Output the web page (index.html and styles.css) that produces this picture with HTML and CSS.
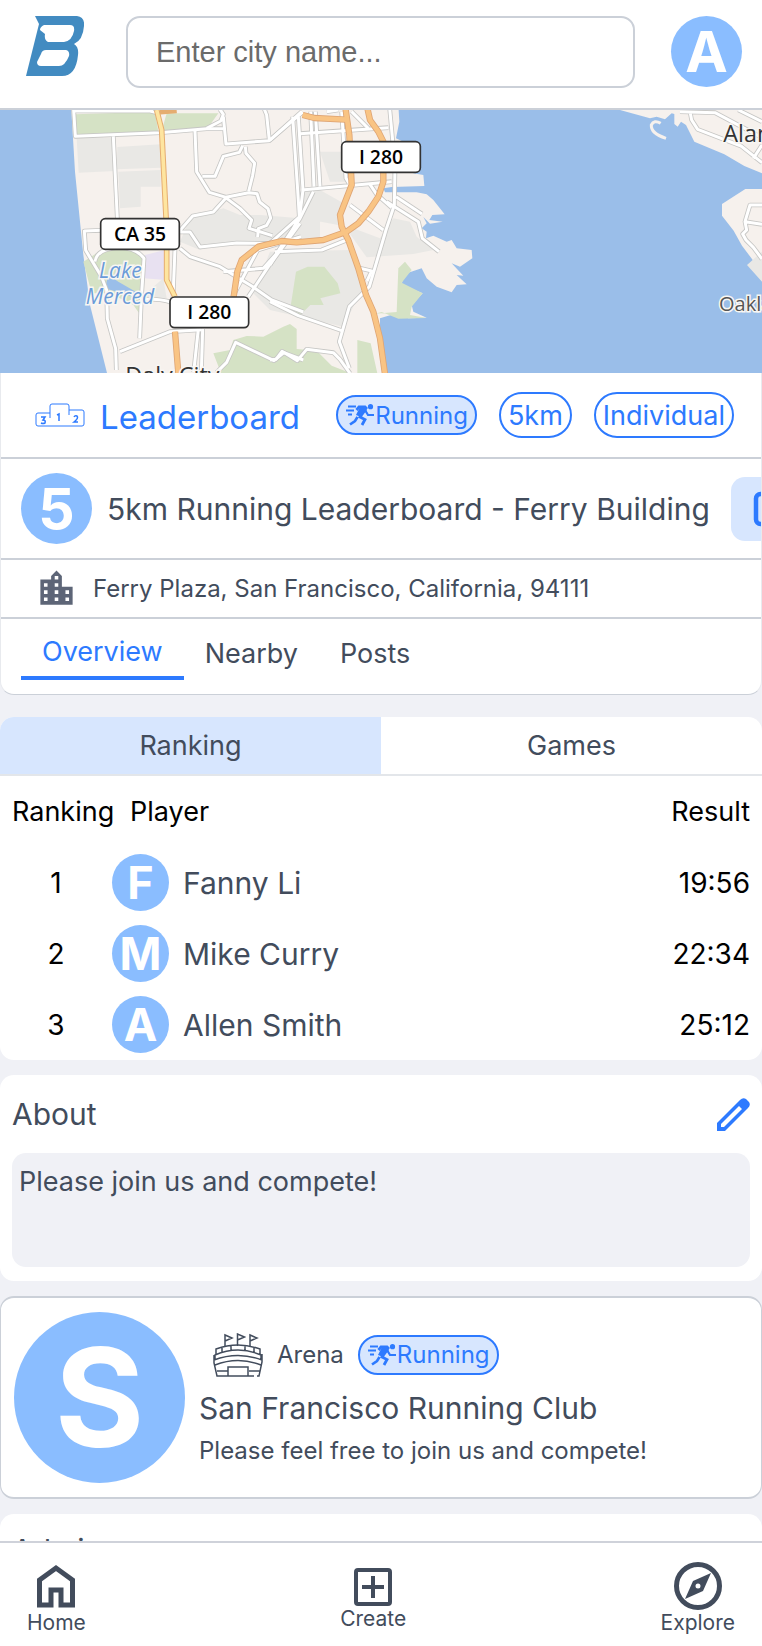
FILE: index.html
```html
<!DOCTYPE html>
<html lang="en">
<head>
    <meta charset="UTF-8">
    <meta name="viewport" content="width=device-width, initial-scale=1">
    <title>Leaderboard</title>
    <link rel="stylesheet" href="styles.css">
</head>
<body>
    <!-- shared icons -->
    <svg class="icon-defs" aria-hidden="true">
        <symbol id="icon-run" viewBox="0 0 30 22">
            <g fill="none" stroke="currentColor" stroke-width="2">
                <path d="M3 2.500h8M1 6.500h8M3 10.500h4"/>
                <path d="M11.500 6l2.500-3h6l2 2M21 5l-6 8 5 2.500-3 5.500" stroke-width="2.800"/>
                <path d="M20 6l3 5h6" stroke-width="2.200"/>
                <path d="M12.500 13l-2.500 4-5 3.500" stroke-width="2.600"/>
            </g>
            <path d="M15 3h6l-5 10-5-2z" fill="currentColor"/>
            <circle cx="25.500" cy="2.700" r="2.600" fill="currentColor"/>
        </symbol>
    </svg>

    <div class="app">
        <header class="topbar">
            <a href="#" class="logo" aria-label="Home page">
                <svg viewBox="0 0 58 60" width="58" height="60">
                    <path fill="#428bc1" fill-rule="evenodd" d="M9 0H51Q59 1 58 10Q57 24 48 28Q53 31 52 39Q50 60 36 60H0L13 8ZM18 9Q14 11 14 14L19 18Q18 24 22 26H38Q46 25 48 15Q49 9 44 9ZM20 34Q16 34 15 38L11 46Q11 50 15 50H33Q39 50 43 40Q44 35 40 34Z"/>
                </svg>
            </a>
            <input type="text" class="search" placeholder="Enter city name..." aria-label="City name">
            <div class="avatar avatar-md">A</div>
        </header>

        <main class="content">
            <svg class="map" viewBox="0 15 2286 789" preserveAspectRatio="xMidYMid slice" role="img" aria-label="Map of San Francisco">
                <defs>
                    <g id="roads">
                        <!-- west side -->
                        <g transform="translate(180 0)">
                            <path d="M40 0l6 94L300 83l140-12h50"/>
                            <path d="M40 18h240M270 18l20 5"/>
                            <path d="M160 94l12 246M405 78l5 122 38 62 50 15 68-14 25 3 8 25 25 20 8 28-12 22-25 10-2 25"/>
                            <path d="M440 70l42-22 8-20-10-15M490 35l8 82 130-10 100-86M612 10l8 20 8 75"/>
                            <path d="M548 122l-10 20-48 12-25 60h-38"/>
                            <path d="M556 125l2 20 26 30-6 36-12 48"/>
                            <path d="M500 277l-40 44-62 12-42 48M356 381h34l30 45 110-12 115 2M500 280l40 30 35 35-8 25 70 22"/>
                            <path d="M125 376l-52 2 4 58 48 80 15 40 2 85 25 90 2 64M180 740l150-60 95-6M345 430l-6 150"/>
                            <path d="M360 430l30 25 90 30 95 58 60 42 95 36M105 470q5-40 75-42 48 0 72 32l-8 120-5 120M245 582q70 0 85 10"/>
                            <path d="M415 672l-14 130M428 672l-4 130M470 802l30-30 27-60 115 55 30-24 58 22"/>
                            <path d="M518 575l75-140 130-40M565 575l60-90 95-130M490 500l120-10 45-50"/>
                        </g>
                        <!-- east side -->
                        <g transform="translate(810 0)">
                            <path d="M0 105L95 20M68 35l15 220 5 80-25 50-63 90M85 35l14 220-10 80-89 80M122 20l10 225M136 20l14 225"/>
                            <path d="M90 86l265-18M95 255l270-25M215 20l13 200 12 20M358 0l17 180-2 120-25 75-50 170-60 60-30 105 30 80"/>
                            <path d="M130 260l-40 80-60 90-30 50M15 440l140-5 75-30M350 290l95 60 12 50 50 40"/>
                            <path d="M378 275l78 52M240 300l100 75M300 238l20 30 45 40M270 490l35 8-14 30"/>
                            <path d="M0 590l85 42 130 45M0 765l18-2 18-24 46 28 28-34 80 10 20 20 30 42M245 20l50 50M170 20l35-5"/>
                        </g>
                        <g transform="translate(1800 0)">
                            <path d="M240 20l105 3 141 75M270 20l5 25 18 28 130 50 63 50M415 15l71 35M460 160l26-40"/>
                            <path d="M486 300h-36l-15 50 5 25-12 12 10 18 22 22 26 35M435 350l51 8"/>
                        </g>
                    </g>
                    <g id="highways">
                        <path d="M701 575L712 500 725 465 775 425 845 408 890 412 970 405 1040 380 1075 355 1105 320 1135 275 1150 230V110L1135 80 1110 45 1100 0"/>
                        <path d="M1035 0L1048 90 1055 240 1020 330 1025 365 1045 405 1075 490 1098 570 1120 620 1140 700 1156 815"/>
                        <path d="M908 30l35 9 95 5M525 680l10 125"/>
                    </g>
                </defs>
                <rect class="map-water" x="0" y="0" width="2286" height="820"/>
                <path class="map-land" d="M213 0L225 200 250 450 270 600 325 820H1161L1140 700V640L1190 625 1225 640 1280 638 1240 620 1235 600 1268 565 1205 540 1212 500 1188 485 1220 505 1265 490 1280 520 1310 545 1355 562 1370 540 1400 538 1370 510 1390 512 1355 475 1380 485 1417 460 1415 435 1370 430 1355 405 1340 410 1300 392 1278 400 1280 380 1265 370 1280 355 1270 336 1290 356 1328 350 1288 345 1297 330 1334 328 1300 285 1280 268 1250 262H1155L1150 250 1175 246 1273 243 1270 210 1240 205 1210 110 1188 100 1198 50 1195 0z"/>
                <path class="map-land" d="M1860 15l90 25 20-5 25 8 20-18 8 2v30l10 8 10-15 15 10 25 50 90 38 60 35 53 22V0zM2286 252h-50l-70 45v35l35 45 25 45 45 60 15 15z"/>
                <path class="map-land-line" d="M1982 55q-20-12-28 5-2 25 44 40"/>

                <path class="map-urban" d="M230 100l116-2v100l-110 5zM352 126l130-8v70l-132 5zM355 200l127-5v50h-60v60l-62 5zM540 410l30-70 100-30 50 20 60 0 120 10 60-20v80l-300 20-60 15zM900 260l60-5 80 45-25 60-110-20zM960 140h80v90h-50zM1060 370l80 30 40-60 50 10 20 45 50 40-60 12-140 10-50-70zM810 440l240-5 40 110-60 120-220-50-50-50zM2286 440l-45 40 45 50zM420 580l70-60 10 60z"/>
                <path class="map-park" d="M225 28l240-8 10 60-245 10zM500 25h155l-30 42-140 10zM250 470l55-35 100 0 35 30-15 110 0 60-25-35-70-35-55 0zM888 500l35-15 50 0 40 50 8 30-60 15 10 20-40 0-30 30-30-20zM640 745l50-10 10-30 40-12 50 2 60-30 20-8 20 15v60l60 5 45 45 50 20 20 20H670zM1072 705l40 10 20 90h-60zM1195 490l20-20 20 25-30 38 63 32-33 40-5 25 50 9-85 2-50-20-20 5 65-5z"/>
                <path class="map-water" d="M325 510l30 20 60 35v15l-100-30z"/>
                <path class="map-mall" d="M435 450l60-15 5 90-70-5z"/>

                <use href="#roads" class="road-edge"/>
                <use href="#roads" class="road-fill"/>
                <path class="yellow-edge" d="M470 15l15 60 15 300 0 150 25 50M480 20l50-4"/>
                <path class="yellow-fill" d="M470 15l15 60 15 300 0 150 25 50"/>
                <use href="#highways" class="highway-edge"/>
                <use href="#highways" class="highway-fill"/>

                <text class="map-lake" x="297" y="520">Lake</text>
                <text class="map-lake" x="257" y="597">Merced</text>
                <text class="map-city" x="376" y="836">Daly City</text>
                <text class="map-city" x="2170" y="110">Alameda</text>
                <text class="map-town" x="2157" y="617">Oakland</text>
                <g class="map-shield">
                    <rect x="302" y="341" width="236" height="92" rx="14"/>
                    <text x="420" y="407">CA 35</text>
                    <rect x="510" y="576" width="236" height="92" rx="14"/>
                    <text x="628" y="642">I 280</text>
                    <rect x="1025" y="110" width="236" height="92" rx="14"/>
                    <text x="1143" y="177">I 280</text>
                </g>
            </svg>

            <section class="card event-card">
                <div class="event-type">
                    <svg class="podium" viewBox="0 0 50 24" width="50" height="24" fill="none" stroke="currentColor" stroke-width="1">
                        <path d="M15 15V3q0-2 2-2h15q2 0 2 2v9M15 10H3q-2 0-2 2v9q0 2 2 2h44q2 0 2-2V9q0-2-2-2H34"/>
                        <path d="M6 14h4l-2 3q3 0 2 3-2 1-4 0M22 12l2-1v7M39 14q1-2 3-1 2 2-3 6h4" stroke-width="1.500"/>
                    </svg>
                    <h1>Leaderboard</h1>
                    <div class="tags">
                        <span class="tag tag-sport"><svg width="30" height="22"><use href="#icon-run"/></svg>Running</span>
                        <span class="tag">5km</span>
                        <span class="tag">Individual</span>
                    </div>
                </div>
                <div class="event-title">
                    <div class="avatar avatar-md">5</div>
                    <h2>5km Running Leaderboard - Ferry Building</h2>
                    <button class="btn-message" aria-label="Message">
                        <svg width="36" height="36" viewBox="0 0 24 24" fill="none" stroke="currentColor" stroke-width="3"><rect x="2" y="2" width="20" height="20" rx="3"/></svg>
                    </button>
                </div>
                <div class="event-address">
                    <svg width="43" height="43" viewBox="0 0 24 24"><path fill="#5d6577" d="M15 11V5l-3-3-3 3v2H3v14h18V11h-6zm-8 8H5v-2h2v2zm0-4H5v-2h2v2zm0-4H5V9h2v2zm6 8h-2v-2h2v2zm0-4h-2v-2h2v2zm0-4h-2V9h2v2zm0-4h-2V5h2v2zm6 12h-2v-2h2v2zm0-4h-2v-2h2v2z"/></svg>
                    <span>Ferry Plaza, San Francisco, California, 94111</span>
                </div>
                <nav class="tabs">
                    <a href="#" class="active">Overview</a>
                    <a href="#">Nearby</a>
                    <a href="#">Posts</a>
                </nav>
            </section>

            <section class="card ranking-card">
                <div class="switch">
                    <button class="active">Ranking</button>
                    <button>Games</button>
                </div>
                <table class="ranking">
                    <thead>
                        <tr><th>Ranking</th><th>Player</th><th>Result</th></tr>
                    </thead>
                    <tbody>
                        <tr>
                            <td>1</td>
                            <td><div class="player"><div class="avatar avatar-sm">F</div>Fanny Li</div></td>
                            <td>19:56</td>
                        </tr>
                        <tr>
                            <td>2</td>
                            <td><div class="player"><div class="avatar avatar-sm">M</div>Mike Curry</div></td>
                            <td>22:34</td>
                        </tr>
                        <tr>
                            <td>3</td>
                            <td><div class="player"><div class="avatar avatar-sm">A</div>Allen Smith</div></td>
                            <td>25:12</td>
                        </tr>
                    </tbody>
                </table>
            </section>

            <section class="card about-card">
                <div class="about-head">
                    <h2>About</h2>
                    <button class="btn-edit" aria-label="Edit">
                        <svg width="33" height="33" viewBox="0 0 33 33"><path fill="currentColor" fill-rule="evenodd" d="M0 33V25L23 2Q26-1 29 1L32 4Q34 7 31 10L8 33ZM4 29H7L25 11 22 8 4 26Z"/></svg>
                    </button>
                </div>
                <p class="about-text">Please join us and compete!</p>
            </section>

            <section class="card club-card">
                <div class="avatar avatar-lg">S</div>
                <div class="club-info">
                    <div class="club-type">
                        <svg class="arena" viewBox="0 0 50 44" width="50" height="44" fill="none" stroke="currentColor" stroke-width="1.500">
                            <path d="M12 14V2l7 3-7 3M24.500 13V1l7 3-7 3M37 14V2l7 3-7 3"/>
                            <path d="M3 21v-5q22-8 44 0v5M2 27v-5q23-10 46 0v5M1 27q24-9 48 0M2 32q23-9 46 0M1 22v8l3 13h37M44 43h2l3-14v-8M4 38h11M36 38h11M15 43v-9h20v9M9 19v-4M18 17v-4M32 17v-4M41 19v-4"/>
                        </svg>
                        <span>Arena</span>
                        <span class="tag tag-sport"><svg width="30" height="22"><use href="#icon-run"/></svg>Running</span>
                    </div>
                    <h2>San Francisco Running Club</h2>
                    <p>Please feel free to join us and compete!</p>
                </div>
            </section>

            <section class="card admin-card">
                <h2>Admin</h2>
            </section>
        </main>

        <nav class="bottombar">
            <a href="#">
                <svg width="38" height="46" viewBox="0 0 38 46" fill="none" stroke="currentColor" stroke-width="5"><path d="M2.500 41V16L19 4l16.500 12v25H24V26H14v15z"/></svg>
                Home
            </a>
            <a href="#" class="create">
                <svg width="38" height="38" viewBox="0 0 38 38" fill="none" stroke="currentColor" stroke-width="4"><rect x="2" y="2" width="34" height="34" rx="2"/><path d="M19 8v22M8 19h22"/></svg>
                Create
            </a>
            <a href="#">
                <svg width="48" height="48" viewBox="0 0 48 48"><circle cx="24" cy="24" r="21.500" fill="none" stroke="currentColor" stroke-width="5"/><path fill="currentColor" fill-rule="evenodd" d="M37 11l-8 18-18 8 8-18zM24 21.500a2.500 2.500 0 100 5 2.500 2.500 0 000-5z"/></svg>
                Explore
            </a>
        </nav>
    </div>
</body>
</html>
```

FILE: styles.css
```css
* {
    box-sizing: border-box;
}
body {
    margin: 0;
    font-family: Inter, 'Liberation Sans', sans-serif;
    font-size: 27px;
    color: #424c5c;
    background-color: #f0f1f6;
}
h1, h2, p {
    margin: 0;
    font-weight: 400;
}
h1 {
    font-size: 33px;
    line-height: 42px;
}
h2 {
    font-size: 30px;
    line-height: 38px;
}
a {
    color: inherit;
    text-decoration: none;
}
button {
    border: none;
    padding: 0;
    font: inherit;
    color: inherit;
    background: none;
    cursor: pointer;
}
svg {
    display: block;
    flex-shrink: 0;
}
.icon-defs {
    position: absolute;
    width: 0;
    height: 0;
}
.app {
    display: flex;
    flex-direction: column;
    height: 100vh;
}

/* top bar */
.topbar {
    display: flex;
    align-items: flex-start;
    padding: 16px 20px 20px 26px;
    background-color: white;
    border-bottom: 2px solid #cbd0d8;
}
.logo {
    margin-right: 42px;
}
.search {
    flex: 1;
    min-width: 0;
    height: 72px;
    margin-right: 36px;
    padding: 0 28px;
    border: 2px solid #cbd0d8;
    border-radius: 14px;
    font-family: 'Liberation Sans', sans-serif;
    font-size: 29px;
    color: #424c5c;
}
.search::placeholder {
    color: #6b6b6b;
}
.avatar {
    display: flex;
    align-items: center;
    justify-content: center;
    flex-shrink: 0;
    border-radius: 50%;
    background-color: #8abdff;
    color: white;
    font-weight: 700;
    line-height: 1;
}
.avatar-sm {
    width: 57px;
    height: 57px;
    font-size: 45px;
}
.avatar-md {
    width: 71px;
    height: 71px;
    font-size: 57px;
}
.avatar-lg {
    width: 171px;
    height: 171px;
    font-size: 137px;
}

.content {
    flex: 1;
    min-height: 0;
    overflow-x: hidden;
    overflow-y: auto;
    scrollbar-width: none;
}
.card {
    background-color: white;
    border-radius: 14px;
    margin-bottom: 15px;
    overflow: hidden;
}

/* map */
.map {
    width: 100%;
    height: 263px;
}
.map-water {
    fill: #9abee9;
}
.map-land {
    fill: #f6f1ed;
}
.map-land-line {
    fill: none;
    stroke: #f6f1ed;
    stroke-width: 9px;
}
.map-urban {
    fill: #e9e8e5;
}
.map-park {
    fill: #d5e2c5;
}
.map-mall {
    fill: #e8e1f1;
}
.road-edge, .road-fill, .yellow-edge, .yellow-fill, .highway-edge, .highway-fill {
    fill: none;
    stroke-linejoin: round;
}
.road-edge {
    stroke: #c6c6c4;
    stroke-width: 14px;
}
.road-fill {
    stroke: white;
    stroke-width: 9px;
}
.yellow-edge {
    stroke: #e5ad70;
    stroke-width: 17px;
}
.yellow-fill {
    stroke: #fee5a0;
    stroke-width: 11px;
}
.highway-edge {
    stroke: #dfa574;
    stroke-width: 19px;
}
.highway-fill {
    stroke: #f9c484;
    stroke-width: 14px;
}
.map-lake, .map-city, .map-town {
    font-family: 'Open Sans', sans-serif;
    paint-order: stroke;
    stroke: #f8f6f3;
    stroke-width: 9px;
}
.map-lake {
    font-size: 63px;
    font-style: italic;
    fill: #6a9bd8;
}
.map-city {
    font-size: 70px;
    fill: #333;
}
.map-town {
    font-size: 60px;
    font-weight: 500;
    fill: #555;
}
.map-shield rect {
    fill: white;
    stroke: #333;
    stroke-width: 5px;
}
.map-shield text {
    font-family: 'Open Sans', sans-serif;
    font-size: 58px;
    font-weight: 600;
    text-anchor: middle;
}

/* event */
.event-card {
    margin-bottom: 22px;
    border: 1px solid #cbd0d8;
    border-top: none;
    border-left-color: #e8eaee;
    border-right-color: #e8eaee;
    border-radius: 0 0 14px 14px;
    white-space: nowrap;
}
.event-type, .event-title, .event-address {
    display: flex;
    align-items: center;
    border-bottom: 2px solid #cbd0d8;
}
.event-type {
    height: 86px;
    padding: 0 27px 0 34px;
    color: #2d7aff;
}
.event-type h1 {
    padding-top: 3px;
}
.podium {
    margin-right: 15px;
}
.tags {
    display: flex;
    align-items: center;
    gap: 22px;
    margin-left: auto;
}
.tag {
    display: flex;
    align-items: center;
    height: 46px;
    padding: 0 7px;
    border: 2px solid #2d7aff;
    border-radius: 23px;
    color: #2d7aff;
    font-size: 27px;
}
.tag-sport {
    height: 40px;
    font-size: 24px;
    background-color: #d7e6fe;
}
.event-title {
    height: 101px;
    padding-left: 20px;
    gap: 15px;
}
.btn-message {
    flex-shrink: 0;
    height: 64px;
    margin-left: 6px;
    padding: 0 22px;
    border-radius: 14px;
    color: #2d7aff;
    background-color: #d7e6fe;
}
.event-address {
    height: 59px;
    padding-left: 34px;
    gap: 15px;
    font-size: 24px;
}
.tabs {
    display: flex;
    align-items: flex-start;
    padding: 9px 20px 14px;
    line-height: 52px;
}
.tabs a {
    padding: 0 21px;
}
.tabs .active {
    line-height: 48px;
    border-bottom: 4px solid #2d7aff;
    color: #2d7aff;
}

/* ranking */
.switch {
    display: flex;
    border-bottom: 2px solid #e3e6ea;
}
.switch button {
    flex: 1;
    height: 57px;
}
.switch .active {
    background-color: #d7e6fe;
}
.ranking {
    width: 100%;
    table-layout: fixed;
    border-collapse: collapse;
    color: black;
}
.ranking th, .ranking td {
    height: 71px;
    padding: 0;
    font-weight: 400;
    text-align: left;
    white-space: nowrap;
}
.ranking th:first-child {
    width: 112px;
    padding-left: 12px;
}
.ranking th:nth-child(2) {
    padding-left: 18px;
}
.ranking td:first-child {
    text-align: center;
}
.ranking th:last-child, .ranking td:last-child {
    width: 140px;
    padding-right: 12px;
    text-align: right;
}
.ranking td {
    font-size: 28px;
}
.player {
    display: flex;
    align-items: center;
    gap: 14px;
    font-size: 30px;
    color: #424c5c;
}

/* about */
.about-card {
    padding: 13px 12px 14px;
}
.about-head {
    display: flex;
    align-items: center;
    justify-content: space-between;
    height: 52px;
    margin-bottom: 13px;
}
.btn-edit {
    color: #2d7aff;
}
.about-text {
    min-height: 114px;
    padding: 12px 7px;
    border-radius: 14px;
    line-height: 34px;
    background-color: #f0f1f6;
}

/* club */
.club-card {
    display: flex;
    align-items: center;
    gap: 14px;
    padding: 14px 13px;
    border: 2px solid #cbd0d8;
    border-width: 2px 1px;
}
.club-info {
    display: flex;
    flex-direction: column;
    gap: 8px;
    padding-top: 4px;
    font-size: 24px;
}
.club-type {
    display: flex;
    align-items: center;
    gap: 14px;
    margin-bottom: 4px;
    padding-left: 14px;
}
.club-info p {
    line-height: 32px;
}
.admin-card {
    padding: 17px 12px;
}

/* bottom bar */
.bottombar {
    display: flex;
    justify-content: space-between;
    align-items: flex-end;
    height: 105px;
    padding: 0 27px 10px;
    border-top: 2px solid #cfd2da;
    background-color: white;
    font-size: 21px;
    line-height: 26px;
}
.bottombar a {
    display: flex;
    flex-direction: column;
    align-items: center;
}
.bottombar .create {
    padding-bottom: 4px;
}
```
